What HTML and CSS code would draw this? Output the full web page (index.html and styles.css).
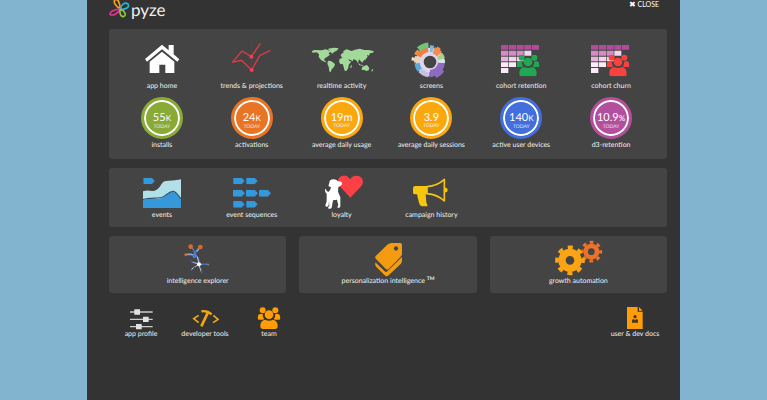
FILE: index.html
```html
<!DOCTYPE html>
<html lang="en">
<head>
<meta charset="utf-8">
<title>pyze</title>
<link rel="stylesheet" href="styles.css">
</head>
<body>
<svg class="symbols" aria-hidden="true">
  <symbol id="people" viewBox="0 0 70 66">
    <circle cx="16" cy="10" r="9"/><circle cx="54" cy="10" r="9"/>
    <path d="M1 34q0-13 8-13h7q0 9 4 14l-2 3H4q-3 0-3-4zM69 34q0-13-8-13h-7q0 9-4 14l2 3h14q3 0 3-4z"/>
    <circle cx="35" cy="23" r="13"/>
    <path d="M9 58q0-18 14-20 12 6 24 0 14 2 14 20 0 8-8 8H17q-8 0-8-8z"/>
  </symbol>
  <symbol id="cohort" viewBox="15 30 192 120">
    <path fill="#b34b9c" d="M51 45h22v14H51zM75 45h21v14H75zM98 45h21v14H98zM121 45h21v14h-21zM144 45h21v14h-21z"/>
    <path fill="#d68bc8" d="M51 62h22v15H51zM75 62h21v15H75zM98 62h21v15H98z"/>
    <path fill="#f5d5ee" d="M121 62h21v15h-21zM75 80h21v14H75zM98 80h21v14H98z"/>
    <path fill="#e8b4de" d="M51 80h22v14H51z"/>
    <path fill="#fbeaf8" d="M51 97h22v14H51zM75 97h21v14H75zM51 114h22v15H51z"/>
    <use href="#people" x="97" y="73" width="70" height="66"/>
  </symbol>
  <symbol id="tag-arrow" viewBox="0 0 36 21"><path d="M2 0h24l10 10.500-10 10.500H2q-2 0-2-2V2q0-2 2-2z"/></symbol>
</svg>
<main class="panel">
  <header class="top">
    <a class="brand" href="#">
      <svg class="logo" viewBox="87 0 66 60" aria-hidden="true">
        <path stroke="#f9a21b" d="M121 27C106 18 99 6 105-1c8-4 15 9 16 28"/>
        <path stroke="#28b6dc" d="M121 27c3-15 14-21 23-15 6 9-7 18-23 15"/>
        <path stroke="#e33391" d="M121 27c-17 1-32 8-31 16 9 6 23-2 31-16"/>
        <path stroke="#8cc63f" d="M121 27c-3 12 0 23 9 23 11-3 5-18-9-23"/>
      </svg>
      <span>pyze</span>
    </a>
    <button class="close" type="button"><b>✖</b> CLOSE</button>
  </header>

  <nav class="card stats">
    <a class="item" href="#"><svg class="icon" viewBox="150 120 192 120" aria-hidden="true"><path fill="#fff" d="M195 177l51-43 20 17v-16h15v28l17 15-6 7-46-37-45 37zM209 185l37-30 37 30v34h-27v-25h-18v25h-29z"/></svg><span>app home</span></a>
    <a class="item" href="#"><svg class="icon" viewBox="420 120 192 120" aria-hidden="true"><g fill="none" stroke="#e33a46" stroke-width="4"><path d="M457 187l29-34 28 17 27-40"/><path d="M457 187l27-6 31 29 24-43 32-16"/><path stroke="#87363c" stroke-width="2" d="M515 124v84"/></g><circle cx="514" cy="170" r="6" fill="#ff3b4b"/><circle cx="515" cy="210" r="6" fill="#ff3b4b"/></svg><span>trends &amp; projections</span></a>
    <a class="item" href="#"><svg class="icon" viewBox="45 30 192 120" aria-hidden="true"><g fill="#a3d99b"><path d="M50 64l8-4 22 1 12-3 12 4 3 5-7 2 5 5-9 7-6 3-3 6 7 6-3 1-12-6-8-10 1-8-7-6-12 1z"/><path d="M99 56l18-3 14 2-6 7-8 4-5 5-5-5zM99 92l9 1 12 9-3 9-7 7-3 9-4-3-2-14-4-9z"/><path d="M137 77l2-6 6-2 0-6 10-5 6 2 9 3 10-4 14-3 14 4 14 0 15 4-3 4-9 2-3 7-6-3 2 6-6 6-7 7-3 5-5-5-5-5-3 11-6-9-9-2 0 6-7-4-9-3-7 2-6-1z"/><path d="M134 86l10-3 15 2 4 8 6 1-8 11-1 9-6 9-5-1-4-14-1-5-8-1-4-7zM167 107l4-2-2 9-3 1zM190 98l7 6 8 2-1 2-12-3zM201 112l8-5 7-2 7 9-2 7-7 2-7-4-7 1z"/><path d="M213 80l3 2-5 8-2-2zM232 117l3 2-4 6-2-2z"/></g></svg><span>realtime activity</span></a>
    <a class="item" href="#"><svg class="icon" viewBox="315 30 192 120" aria-hidden="true"><g fill="none" transform="rotate(-90 408 96)">
      <circle cx="408" cy="96" r="31" stroke="#ddd5ec" stroke-width="24"/>
      <g stroke-width="20">
        <circle cx="408" cy="96" r="34" stroke="#8d6cc0" pathLength="100" stroke-dasharray="25 75" stroke-dashoffset="-26"/>
        <circle cx="408" cy="96" r="36" stroke="#c7bfe0" pathLength="100" stroke-dasharray="11 89" stroke-dashoffset="-52"/>
        <circle cx="408" cy="96" r="37" stroke="#5aa9d6" pathLength="100" stroke-dasharray="9 91" stroke-dashoffset="-64"/>
        <circle cx="408" cy="96" r="38" stroke="#e5d5b2" pathLength="100" stroke-dasharray="7 93" stroke-dashoffset="-74"/>
        <circle cx="408" cy="96" r="37" stroke="#f47d3c" pathLength="100" stroke-dasharray="15 85" stroke-dashoffset="-82"/>
        <circle cx="408" cy="96" r="40" stroke="#80bce0" pathLength="100" stroke-dasharray="4 96"/>
        <circle cx="408" cy="96" r="37" stroke="#f68b4b" pathLength="100" stroke-dasharray="9 91" stroke-dashoffset="-5"/>
        <circle cx="408" cy="96" r="36" stroke="#a9cf85" pathLength="100" stroke-dasharray="6 94" stroke-dashoffset="-15"/>
        <circle cx="408" cy="96" r="35" stroke="#d9e5ea" pathLength="100" stroke-dasharray="4 96" stroke-dashoffset="-22"/>
      </g>
      <circle cx="408" cy="96" r="26" stroke="#ddd5ec" stroke-width="10" pathLength="100" stroke-dasharray="50 50" stroke-dashoffset="-50"/>
      <circle cx="408" cy="96" r="51" stroke="#76c276" stroke-width="16" pathLength="100" stroke-dasharray="10 90" stroke-dashoffset="-88"/>
      <circle cx="408" cy="96" r="46" stroke="#8d6cc0" stroke-width="10" pathLength="100" stroke-dasharray="10 90" stroke-dashoffset="-34"/>
      <circle cx="408" cy="96" r="49" stroke="#f68b4b" stroke-width="8" pathLength="100" stroke-dasharray="5 95" stroke-dashoffset="-82"/>
      <circle cx="408" cy="96" r="51" stroke="#eee1c4" stroke-width="10" pathLength="100" stroke-dasharray="3 97" stroke-dashoffset="-76"/>
      <circle cx="408" cy="96" r="48" stroke="#f68b4b" stroke-width="6" pathLength="100" stroke-dasharray="4 96" stroke-dashoffset="-7"/>
    </g></svg><span>screens</span></a>
    <a class="item" href="#"><svg class="icon fill-green" viewBox="0 0 192 120" aria-hidden="true"><use href="#cohort" width="192" height="120"/></svg><span>cohort retention</span></a>
    <a class="item" href="#"><svg class="icon fill-red" viewBox="0 0 192 120" aria-hidden="true"><use href="#cohort" width="192" height="120"/></svg><span>cohort churn</span></a>

    <a class="item" href="#"><span class="dial green"><strong>55<small>K</small></strong><em>TODAY</em></span><span>installs</span></a>
    <a class="item" href="#"><span class="dial orange"><strong>24<small>K</small></strong><em>TODAY</em></span><span>activations</span></a>
    <a class="item" href="#"><span class="dial amber"><strong>19m</strong><em>TODAY</em></span><span>average daily usage</span></a>
    <a class="item" href="#"><span class="dial amber"><strong>3.9</strong><em>TODAY</em></span><span>average daily sessions</span></a>
    <a class="item" href="#"><span class="dial blue"><strong>140<small>K</small></strong><em>TODAY</em></span><span>active user devices</span></a>
    <a class="item" href="#"><span class="dial purple"><strong>10.9<small>%</small></strong><em>TODAY</em></span><span>d3-retention</span></a>
  </nav>

  <nav class="card tools">
    <a class="item" href="#"><svg class="icon" viewBox="90 30 192 102" aria-hidden="true"><use href="#tag-arrow" x="129" y="38" width="37" height="20" fill="#3498db"/><path fill="#b3dfe8" d="M129 79c17-6 27 3 40-4 15-8 14-27 30-27 17-1 23-1 44-5v86H129z"/><path fill="#3498db" d="M129 106c20-9 44-1 60-8 13-6 18-17 30-17 10 0 16 14 24 23v25H129z"/><path fill="none" stroke="#2d5a78" stroke-width="4" d="M129 104c20-9 44-1 60-8 13-6 18-17 30-17 10 0 16 14 24 23"/></svg><span>events</span></a>
    <a class="item" href="#"><svg class="icon fill-sky" viewBox="360 30 192 102" aria-hidden="true"><use href="#tag-arrow" x="399" y="38" width="36" height="20"/><use href="#tag-arrow" x="438" y="38" width="36" height="20"/><use href="#tag-arrow" x="399" y="74" width="36" height="21"/><use href="#tag-arrow" x="438" y="74" width="36" height="21"/><use href="#tag-arrow" x="477" y="74" width="36" height="21"/><use href="#tag-arrow" x="399" y="108" width="36" height="20"/><use href="#tag-arrow" x="438" y="108" width="36" height="20"/></svg><span>event sequences</span></a>
    <a class="item" href="#"><svg class="icon" viewBox="30 30 192 102" aria-hidden="true"><path fill="#fb4146" d="M151 98l-33-36c-9-13-3-28 11-30 10-1 17 4 21 11 5-8 12-11 20-11 17 1 24 17 15 30z"/><path fill="#fff" d="M89 47q8-6 19-3l6 5q10-2 12 4l-1 7-10 7-1 13 7 17v27q0 5-7 5l-2-3 3-5-4-17-12 2-4 22q-1 4-9 3l-2-3 4-6-1-15-1 13q-1 6-8 5l-2-4 4-12V86q-6-4-5-14l3 1q1 7 7 8l5-5 3-9-8-4 3-9z"/></svg><span>loyalty</span></a>
    <a class="item" href="#"><svg class="icon" viewBox="300 30 192 102" aria-hidden="true"><path fill="#f5c60c" d="M349 63h35v25h-4l2 24q1 4 3 7v5h-17q-7-4-8-11l-6-25h-5q-7 0-7-5V70q0-7 7-7zM438 68h4q4 2 4 7t-4 7h-4z"/><path fill="none" stroke="#f5c60c" stroke-width="5" stroke-linejoin="round" d="M384 65c24-2 37-8 52-22v65c-15-14-28-20-52-22z"/></svg><span>campaign history</span></a>
  </nav>

  <nav class="features">
    <a class="card item" href="#"><svg class="icon" viewBox="196 27 192 102" aria-hidden="true"><g fill="none" stroke-width="4"><path stroke="#4d7ed0" d="M270 44q13 10 12 25 4-17 16-24M255 68l27 1q16 8 12 28"/><path stroke="#bcc7dc" stroke-width="3" d="M282 69q-15-6-28-1M288 60l10-13M290 74l5 22-22-6M294 97l-22 15M294 97l9 25M296 97l28 0"/><path stroke="#365fae" stroke-width="3" d="M268 85l10 7M272 117l12-13M303 108v17M304 97h14l8 5"/></g><g fill="#d96b27"><circle cx="270" cy="44" r="7"/><circle cx="299" cy="45" r="7"/><circle cx="255" cy="68" r="4"/></g><circle cx="282" cy="71" r="7" fill="#4d7ed0"/><circle cx="295" cy="97" r="6" fill="#fff"/></svg><span>intelligence explorer</span></a>
    <a class="card item" href="#"><svg class="icon" viewBox="196 27 192 102" aria-hidden="true"><path fill="#f39c12" fill-rule="evenodd" d="M303 33h25q6 0 6 6v26q0 5-4 9l-35 36q-5 5-10 0l-29-29q-5-5 0-10l34-33q6-5 13-5zm13 10a6.500 6.500 0 1 0 .1 0z"/><path fill="#f39c12" d="M254 91l28 27q4 4 8 0l44-43v13q0 4-4 8l-36 34q-6 6-12 0l-25-25q-5-5-3-14z"/></svg><span>personalization intelligence <sup>TM</sup></span></a>
    <a class="card item" href="#"><svg class="icon" viewBox="181 27 192 102" aria-hidden="true"><g fill="none" stroke="#e9722c"><circle cx="317" cy="59" r="17" stroke-width="14"/><circle cx="317" cy="59" r="28" stroke-width="9" pathLength="16" stroke-dasharray="1 1" stroke-dashoffset=".5"/></g><g fill="none" stroke="#fba414"><circle cx="253" cy="85" r="24" stroke-width="22"/><circle cx="253" cy="85" r="39" stroke-width="11" pathLength="16" stroke-dasharray="1 1" stroke-dashoffset=".5"/></g></svg><span>growth automation</span></a>
  </nav>

  <footer class="bottom">
    <a class="item" href="#"><svg class="icon" viewBox="60 219 120 69" aria-hidden="true"><path stroke="#ccc" stroke-width="4" d="M87 240h68M87 262h68M87 284h68"/><path fill="#e2e2e2" d="M100 232h17v16h-17zM126 254h17v16h-17zM105 276h17v16h-17z"/></svg><span>app profile</span></a>
    <a class="item" href="#"><svg class="icon" viewBox="252 219 120 69" aria-hidden="true"><g fill="none" stroke="#f5a70e" stroke-width="5"><path d="M293 250l-15 10 15 12M337 250l14 12-15 10"/><path stroke-width="8" d="M320 243l-19 40"/><path stroke-width="7" d="M301 238q17-3 31 9"/></g></svg><span>developer tools</span></a>
    <a class="item" href="#"><svg class="icon fill-amber" viewBox="444 219 120 69" aria-hidden="true"><use href="#people" x="469" y="225" width="70" height="66"/></svg><span>team</span></a>
    <a class="item docs" href="#"><svg class="icon" viewBox="390 219 120 69" aria-hidden="true"><path fill="#ff9c06" d="M426 225h32v14h15v52h-47zM462 225l11 11h-11z"/><g fill="#433827"><circle cx="450" cy="254" r="5"/><path d="M441 272v-6q0-5 5-5l4 4 4-4q5 0 5 5v6z"/></g></svg><span>user &amp; dev docs</span></a>
  </footer>
</main>
</body>
</html>
```
FILE: styles.css
```css
* { box-sizing: border-box; }

body {
  margin: 0;
  padding: 0 87px;
  background: #83b4cf;
  font-family: Lato, "Liberation Sans", sans-serif;
  font-size: 7px;
  line-height: 12px;
  color: #f0f0f0;
  text-rendering: geometricPrecision;
}

a { color: inherit; text-decoration: none; }
.symbols { position: absolute; width: 0; height: 0; }

.panel {
  min-height: 100vh;
  padding: 0 13px 0 22px;
  background: #333;
}

.top {
  display: flex;
  justify-content: space-between;
  align-items: flex-start;
  height: 29px;
}
.brand { display: flex; font-size: 17px; line-height: 20px; }
.logo {
  width: 22px;
  height: 20px;
  fill: none;
  stroke-width: 5;
}
.close {
  margin: 0;
  padding: 0 8px 0 0;
  border: 0;
  background: none;
  color: #fff;
  font: inherit;
  line-height: 8px;
}
.close b { font-family: "DejaVu Sans", sans-serif; font-size: 8px; }

.card { background: #444; border-radius: 3px; }
.stats, .tools {
  display: grid;
  grid-template-columns: repeat(6, 1fr);
  margin-bottom: 9px;
  padding: 11px 11px 8px 8px;
}
.stats { row-gap: 5px; }
.tools { padding-top: 7px; padding-bottom: 6px; }

.item {
  display: flex;
  flex-direction: column;
  align-items: center;
  white-space: nowrap;
}
.icon { display: block; width: 64px; height: 40px; overflow: visible; }
.tools .icon, .features .icon { height: 34px; }
.bottom .icon { width: 40px; height: 23px; }

.fill-green { fill: #21a855; }
.fill-red { fill: #f9423f; }
.fill-sky { fill: #3498db; }
.fill-amber { fill: #ff9c06; }

.dial {
  display: flex;
  flex-direction: column;
  align-items: center;
  width: 42px;
  height: 42px;
  padding-top: 12px;
  border: 3px solid var(--tone);
  border-radius: 50%;
  background: var(--tone);
  box-shadow: inset 0 0 0 2px #fff;
  color: #fff;
}
.dial strong { font-size: 11px; font-weight: 400; line-height: 11px; }
.dial small { font-size: 8px; }
.dial em { font-size: 5px; font-style: normal; line-height: 6px; opacity: 0.8; }
.green { --tone: #8aa936; }
.orange { --tone: #e87424; }
.amber { --tone: #fba80f; }
.blue { --tone: #426fdc; }
.purple { --tone: #b34f9c; }

.features {
  display: grid;
  grid-template-columns: repeat(3, 1fr);
  gap: 13px;
}
.features .item { padding: 5px 0 6px; }
sup { font-size: 5px; font-weight: 700; line-height: 0; }

.bottom { display: flex; padding-top: 12px; }
.bottom .item { width: 64px; }
.bottom .docs { margin-left: auto; }
```
